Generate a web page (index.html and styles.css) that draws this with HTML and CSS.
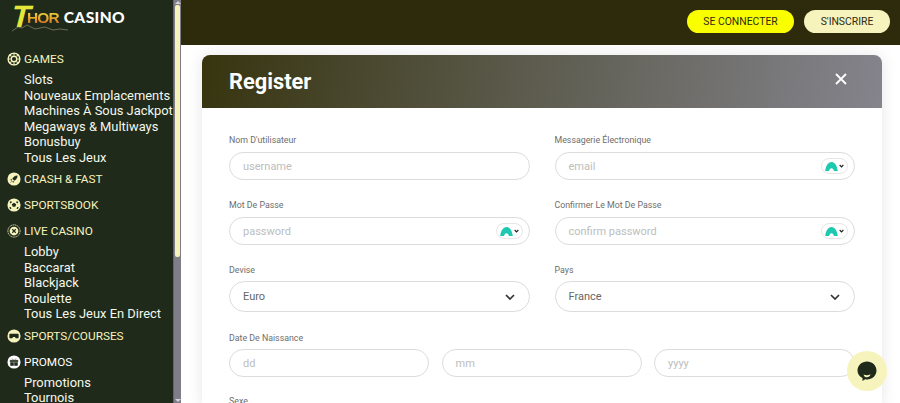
FILE: index.html
```html
<!DOCTYPE html>
<html lang="fr">
<head>
  <meta charset="UTF-8">
  <meta name="viewport" content="width=device-width, initial-scale=1.0">
  <title>Thor Casino - Register</title>
  <link rel="stylesheet" href="styles.css">
</head>
<body>
  <aside class="sidebar">
    <div class="sidebar-inner">
      <a class="logo">
        <span class="logo-t">T</span>
        <span class="logo-thor">HOR</span>
        <span class="logo-casino">CASINO</span>
        <svg class="logo-bolt" viewBox="0 0 56 8"><path d="M0 7L6 3l4 1 5-3 8 4 10-2 8 3 7-1 8 1" fill="none" stroke="#8d8a6a" stroke-width=".7"/></svg>
      </a>

      <nav class="menu">
        <div class="menu-group">
          <div class="menu-title">
            <svg class="menu-icon" viewBox="0 0 16 16"><circle cx="8" cy="8" r="6.7" fill="none" stroke="#f6f3bd" stroke-width="1.6"/><circle cx="8" cy="8" r="3.2" fill="none" stroke="#f6f3bd" stroke-width="1.6"/><path d="M8 1v3M8 12v3M1 8h3M12 8h3M3 3l2 2M11 11l2 2M13 3l-2 2M5 11l-2 2" stroke="#f6f3bd" stroke-width="1.2"/></svg>
            GAMES
          </div>
          <div class="menu-links">
            <a class="menu-link">Slots</a>
            <a class="menu-link">Nouveaux Emplacements</a>
            <a class="menu-link">Machines À Sous Jackpot</a>
            <a class="menu-link">Megaways &amp; Multiways</a>
            <a class="menu-link">Bonusbuy</a>
            <a class="menu-link">Tous Les Jeux</a>
          </div>
        </div>
        <div class="menu-group">
          <div class="menu-title">
            <svg class="menu-icon" viewBox="0 0 16 16"><circle cx="8" cy="8" r="7.5" fill="#f6f3bd"/><path d="M11.8 4.2c-2.600.1-4.400 1.300-5.500 3.500l2 2c2.200-1.100 3.400-2.900 3.500-5.500zM5.700 8.300l-1.700.5 1 1zM7.700 10.300l-.5 1.700-1-1zM5.300 10.700l-1.300 1.300z" fill="#1f2a1b" stroke="#1f2a1b" stroke-width=".4"/></svg>
            CRASH &amp; FAST
          </div>
        </div>
        <div class="menu-group">
          <div class="menu-title">
            <svg class="menu-icon" viewBox="0 0 16 16"><circle cx="8" cy="8" r="7.5" fill="#f6f3bd"/><path d="M8 5.300l2.500 1.800-1 2.900h-3l-1-2.900zM3 4.500l1.800-1 .7 1.500-1.500 1.200zM13 4.500l-1.800-1-.7 1.500 1.500 1.200zM2.500 10.500l1.700-.3.900 1.800-1.200.8zM13.500 10.500l-1.700-.3-.9 1.800 1.200.8z" fill="#1f2a1b"/></svg>
            SPORTSBOOK
          </div>
        </div>
        <div class="menu-group">
          <div class="menu-title">
            <svg class="menu-icon" viewBox="0 0 16 16"><circle cx="8" cy="8" r="7" fill="#1f2a1b" stroke="#f6f3bd" stroke-width="1" stroke-dasharray="1.500 .7"/><circle cx="8" cy="8" r="5" fill="#f6f3bd"/><path d="M6 6l4 4M10 6l-4 4" stroke="#1f2a1b" stroke-width="1.300"/></svg>
            LIVE CASINO
          </div>
          <div class="menu-links">
            <a class="menu-link">Lobby</a>
            <a class="menu-link">Baccarat</a>
            <a class="menu-link">Blackjack</a>
            <a class="menu-link">Roulette</a>
            <a class="menu-link">Tous Les Jeux En Direct</a>
          </div>
        </div>
        <div class="menu-group">
          <div class="menu-title">
            <svg class="menu-icon" viewBox="0 0 16 16"><circle cx="8" cy="8" r="7.500" fill="#f6f3bd"/><path d="M3.500 5.500h9a.8.8 0 0 1 .8.8v3.400a1 1 0 0 1-1 1h-2.300l-1-1.500h-2l-1 1.500H3.700a1 1 0 0 1-1-1V6.300a.8.8 0 0 1 .8-.8z" fill="#1f2a1b"/></svg>
            SPORTS/COURSES
          </div>
        </div>
        <div class="menu-group">
          <div class="menu-title menu-title-white">
            <svg class="menu-icon" viewBox="0 0 16 16"><circle cx="8" cy="8" r="7.500" fill="#fff"/><path d="M3.500 6h9v1.800h-9zM4 8.500h3.500V12H4zM8.500 8.500H12V12H8.500zM7.500 6L5.500 3.800M8.500 6l2-2.200" fill="#1f2a1b" stroke="#1f2a1b" stroke-width=".5"/></svg>
            PROMOS
          </div>
          <div class="menu-links">
            <a class="menu-link">Promotions</a>
            <a class="menu-link">Tournois</a>
          </div>
        </div>
      </nav>
    </div>
    <div class="scrollbar">
      <span class="scroll-arrow"></span>
      <div class="scroll-thumb"></div>
      <span class="scroll-arrow scroll-arrow-down"></span>
    </div>
  </aside>

  <div class="main">
    <header class="topbar">
      <button class="btn btn-login">SE CONNECTER</button>
      <button class="btn btn-signup">S'INSCRIRE</button>
    </header>

    <section class="content">
      <div class="card">
        <div class="card-head">
          <h1>Register</h1>
          <svg class="close-icon" viewBox="0 0 12 12"><path d="M1 1l10 10M11 1L1 11" stroke="#fff" stroke-width="1.800"/></svg>
        </div>

        <form class="card-body">
          <div class="form-grid">
            <div class="field">
              <label>Nom D'utilisateur</label>
              <div class="input">username</div>
            </div>
            <div class="field">
              <label>Messagerie Électronique</label>
              <div class="input">email
                <span class="vpn-badge">
                  <svg viewBox="0 0 14 10" class="vpn-mark"><path d="M0 10C.8 4 3.200 0 7 0s6.200 4 7 10H9.800C9.300 8.500 8.300 7 7 7S4.700 8.500 4.200 10z" fill="#1fc8b0"/></svg>
                  <svg viewBox="0 0 6 4" class="vpn-caret"><path d="M.8.8L3 3 5.200.8" fill="none" stroke="#222" stroke-width="1.400"/></svg>
                </span>
              </div>
            </div>
            <div class="field">
              <label>Mot De Passe</label>
              <div class="input">password
                <span class="vpn-badge">
                  <svg viewBox="0 0 14 10" class="vpn-mark"><path d="M0 10C.8 4 3.200 0 7 0s6.200 4 7 10H9.800C9.300 8.500 8.300 7 7 7S4.700 8.500 4.200 10z" fill="#1fc8b0"/></svg>
                  <svg viewBox="0 0 6 4" class="vpn-caret"><path d="M.8.8L3 3 5.200.8" fill="none" stroke="#222" stroke-width="1.400"/></svg>
                </span>
              </div>
            </div>
            <div class="field">
              <label>Confirmer Le Mot De Passe</label>
              <div class="input">confirm password
                <span class="vpn-badge">
                  <svg viewBox="0 0 14 10" class="vpn-mark"><path d="M0 10C.8 4 3.200 0 7 0s6.200 4 7 10H9.800C9.300 8.500 8.300 7 7 7S4.700 8.500 4.200 10z" fill="#1fc8b0"/></svg>
                  <svg viewBox="0 0 6 4" class="vpn-caret"><path d="M.8.8L3 3 5.200.8" fill="none" stroke="#222" stroke-width="1.400"/></svg>
                </span>
              </div>
            </div>
            <div class="field field-tight">
              <label>Devise</label>
              <div class="input select">Euro
                <svg class="select-caret" viewBox="0 0 10 6"><path d="M1 1l4 4 4-4" fill="none" stroke="#333" stroke-width="1.700"/></svg>
              </div>
            </div>
            <div class="field field-tight">
              <label>Pays</label>
              <div class="input select">France
                <svg class="select-caret" viewBox="0 0 10 6"><path d="M1 1l4 4 4-4" fill="none" stroke="#333" stroke-width="1.700"/></svg>
              </div>
            </div>
          </div>

          <div class="field field-tight field-date">
            <label>Date De Naissance</label>
            <div class="date-row">
              <div class="input">dd</div>
              <div class="input">mm</div>
              <div class="input">yyyy</div>
            </div>
          </div>

          <div class="field">
            <label>Sexe</label>
          </div>
        </form>
      </div>
    </section>
  </div>

  <button class="chat-btn">
    <svg viewBox="0 0 24 24"><path d="M12 2.500c5.200 0 9.500 3.900 9.500 9s-4.300 9-9.500 9c-.7 0-1.300-.1-1.900-.2L7.500 22v-2.900c-3-1.500-5-4.200-5-7.600 0-5.100 4.300-9 9.500-9z" fill="#1f2a1b"/><path d="M8.500 15.500c2.200 1 4.800 1 7-.2-.6 2.300-1.800 3-3.500 3s-3-.6-3.500-2.800z" fill="#f6f3bd"/></svg>
  </button>
</body>
</html>
```

FILE: styles.css
```css
* {
  margin: 0;
  padding: 0;
  box-sizing: border-box;
}

html, body {
  height: 100%;
  overflow: hidden;
}

body {
  display: flex;
  font-family: Roboto, Arial, sans-serif;
  background-color: #fff;
}

.sidebar {
  display: flex;
  width: 181px;
  height: 100vh;
  flex-shrink: 0;
  background-color: #1f2a1b;
}

.sidebar-inner {
  flex: 1;
  min-width: 0;
  overflow: hidden;
  padding: 4px 0 0 7px;
}

.logo {
  position: relative;
  display: flex;
  align-items: center;
  height: 26px;
  padding-left: 5px;
}

.logo-t {
  display: inline-block;
  width: 15px;
  font-family: "Liberation Sans", Arial, sans-serif;
  font-weight: 700;
  font-size: 31px;
  line-height: 26px;
  color: #e4e63c;
  transform: skewX(-14deg);
}

.logo-thor {
  margin-top: 2px;
  font-family: "Liberation Sans", Arial, sans-serif;
  font-weight: 700;
  font-size: 15.500px;
  letter-spacing: -0.900px;
  background: linear-gradient(180deg, #ecd13a 20%, #e59a2a 60%, #c9581c 90%);
  -webkit-background-clip: text;
  background-clip: text;
  color: transparent;
}

.logo-casino {
  margin-left: 5px;
  font-family: Lato, Arial, sans-serif;
  font-weight: 900;
  font-size: 15.500px;
  letter-spacing: 0.400px;
  color: #fff;
}

.logo-bolt {
  position: absolute;
  left: 5px;
  bottom: -2px;
  width: 56px;
  height: 8px;
}

.menu {
  margin-top: 16px;
}

.menu-title {
  display: flex;
  align-items: center;
  gap: 3px;
  height: 26px;
  font-size: 11.800px;
  color: #f6f3bd;
}

.menu-title-white {
  color: #fff;
}

.menu-icon {
  width: 14px;
  height: 14px;
  flex-shrink: 0;
}

.menu-links {
  padding-bottom: 1px;
}

.menu-link {
  display: block;
  height: 15.500px;
  line-height: 15.500px;
  margin-left: 17px;
  font-size: 12.900px;
  white-space: nowrap;
  color: #f4f7ec;
}

.scrollbar {
  display: flex;
  flex-direction: column;
  width: 8px;
  background-color: #7f7e88;
  border-left: 1px solid #66656c;
}

.scroll-arrow {
  display: flex;
  justify-content: center;
  align-items: center;
  height: 5px;
  flex-shrink: 0;
}

.scroll-arrow::before {
  content: "";
  border-left: 3px solid transparent;
  border-right: 3px solid transparent;
  border-bottom: 3px solid #d4d4d8;
}

.scroll-thumb {
  height: 252px;
  margin: 0 1px;
  border-radius: 2px;
  background-color: #f5f2bc;
}

.scroll-arrow-down {
  margin-top: auto;
}

.scroll-arrow-down::before {
  border-bottom: none;
  border-top: 3px solid #d4d4d8;
}

.main {
  flex: 1;
  display: flex;
  flex-direction: column;
  min-width: 0;
}

.topbar {
  display: flex;
  justify-content: flex-end;
  align-items: center;
  gap: 10px;
  height: 45px;
  flex-shrink: 0;
  padding: 0 10px 2px 0;
  background-color: #2e2b0d;
}

.btn {
  height: 23px;
  border: none;
  border-radius: 12px;
  font-family: Roboto, Arial, sans-serif;
  font-size: 10.400px;
  color: #2e2b0d;
}

.btn-login {
  width: 107px;
  background-color: #faff00;
}

.btn-signup {
  width: 86px;
  background-color: #f6f3bd;
}

.content {
  flex: 1;
  padding: 10px 18px 0 21px;
  overflow: hidden;
}

.card {
  background-color: #fff;
  border-radius: 8px 8px 0 0;
  box-shadow: 0 0 15px rgba(0, 0, 0, 0.1);
}

.card-head {
  display: flex;
  justify-content: space-between;
  align-items: center;
  height: 53px;
  padding: 0 35px 0 27px;
  border-radius: 8px 8px 0 0;
  background: linear-gradient(100deg, #37340f 0%, #5a594a 45%, #85848d 100%);
}

.card-head h1 {
  font-size: 21.800px;
  font-weight: 700;
  color: #fff;
}

.close-icon {
  width: 12px;
  height: 12px;
  margin-bottom: 5px;
}

.card-body {
  padding: 26px 27px 0;
}

.form-grid {
  display: grid;
  grid-template-columns: 300.500px 300.500px;
  column-gap: 25px;
}

.field {
  margin-bottom: 19px;
}

.field label {
  display: block;
  height: 12px;
  margin-bottom: 6px;
  font-size: 8.800px;
  line-height: 12px;
  color: #6e6e6e;
}

.field-tight {
  margin-bottom: 20px;
}

.field-tight label {
  margin-bottom: 5px;
}

.field-date {
  margin-bottom: 18px;
}

.input {
  display: flex;
  justify-content: space-between;
  align-items: center;
  height: 28px;
  padding: 0 6px 0 13px;
  border: 1px solid #dcdcdc;
  border-radius: 14px;
  font-size: 11px;
  color: #bdbdbd;
}

.select {
  height: 31px;
  padding-right: 14px;
  border-radius: 16px;
  color: #666;
}

.select-caret {
  width: 10px;
  height: 6px;
}

.vpn-badge {
  display: flex;
  align-items: center;
  gap: 1px;
  height: 16px;
  padding: 0 3px;
  border: 1px solid #e6e6e6;
  border-radius: 8px;
}

.vpn-mark {
  width: 13px;
  height: 9px;
}

.vpn-caret {
  width: 5px;
  height: 4px;
}

.date-row {
  display: grid;
  grid-template-columns: 200px 200px 201px;
  column-gap: 12.500px;
}

.chat-btn {
  position: absolute;
  top: 351px;
  right: 13px;
  display: flex;
  justify-content: center;
  align-items: center;
  width: 40px;
  height: 40px;
  border: none;
  border-radius: 50%;
  background-color: #f6f3bd;
}

.chat-btn svg {
  width: 24px;
  height: 24px;
}
```
